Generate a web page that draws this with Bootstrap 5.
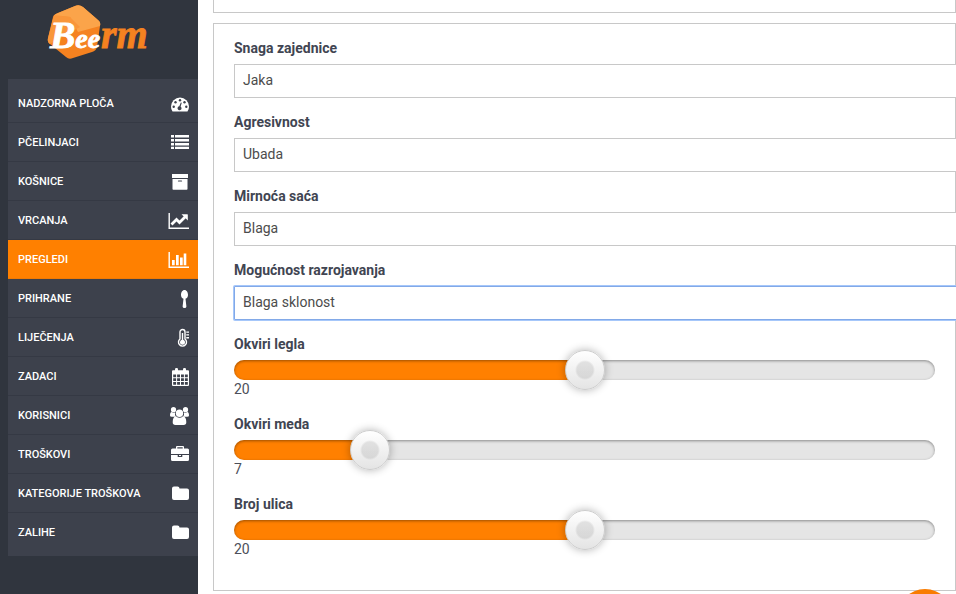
<!DOCTYPE html>
<html lang="hr">
<head>
<meta charset="utf-8">
<meta name="viewport" content="width=device-width, initial-scale=1">
<title>Beerm</title>
<link href="https://cdn.jsdelivr.net/npm/bootstrap@5.3.0/dist/css/bootstrap.min.css" rel="stylesheet">
<style>
  body { font-family: Roboto, "Liberation Sans", sans-serif; font-size: 14px; line-height: 20px; color: #414552; }
  .side-bar { width: 198px; background: #30353e; }
  .brand-link { height: 79px; padding: 2px 0 0 44px; }
  .side-menu { background: #3d414c; padding: 5px 0 4px; }
  .side-menu a { height: 39px; padding: 2px 8px 0 10px; color: #fff; font-size: 11px; font-weight: 500; border-bottom: 1px solid #353944; }
  .side-menu a.active { background: #ff8000; border-bottom-color: #ef7a05; }
  .side-menu a:last-child { border-bottom-color: transparent; }
  .side-menu svg { width: 22px; height: 20px; fill: #fff; }
  .page-main { min-width: 0; padding-left: 15px; }
  .panel { border: 1px solid #c8c8c8; padding: 15px 20px; }
  .panel-above { border-top: 0; height: 13px; padding: 0; margin-bottom: 10px; }
  .field { margin-bottom: 15px; }
  .field label { font-weight: 700; line-height: 18px; margin-bottom: 7px; }
  .field output { line-height: 18px; padding-bottom: 2px; color: #4c4f5a; }
  /* selects run on past the panel's right edge */
  .wide-select { width: calc(100% + 60px); height: 34px; padding: 5px 8px 7px; border: 1px solid #c8c8c8; border-radius: 0; background: #fff; color: #4c4c4c; appearance: none; outline: 0; }
  .wide-select:focus, .wide-select.focused { border-color: #82a9e8; box-shadow: 0 0 0 1px #a6c7fa; border-radius: 1px; }
  .slider { width: 100%; height: 20px; margin: 0; appearance: none; border-radius: 10px; box-shadow: inset 0 1px 3px rgba(0,0,0,.4);
    background: linear-gradient(to right, #ff8000 var(--fill), #e5e5e5 var(--fill)); }
  .slider::-webkit-slider-thumb { appearance: none; width: 40px; height: 40px; border: 1px solid #ccc; border-radius: 50%;
    background: radial-gradient(circle, rgba(0,0,0,.09) 8px, transparent 10px), linear-gradient(#fff, #e4e4e4); box-shadow: 0 0 8px rgba(0,0,0,.3); }
  .fab { right: 3px; bottom: -51px; width: 56px; height: 56px; background: #f97c00; }
</style>
</head>
<body class="bg-white">
<div class="d-flex min-vh-100 overflow-hidden">
  <aside class="side-bar flex-shrink-0">
    <a href="#" class="brand-link d-block">
      <svg width="110" height="60" viewBox="44 2 110 60">
        <path d="M58 13 75 6Q79 4 83 7L98 20Q101 22 100 26L97 47Q96 51 92 52L73 58Q69 60 66 57L50 44Q47 42 48 38L53 17Q54 14 58 13Z" fill="#f58220"/>
        <path d="M58 13 75 6Q79 4 83 7L98 20Q101 22 100 26L78 32 70 17 54 16Q55 14 58 13Z" fill="#fba44a"/>
        <path d="M54 15 70 17 80 27 50 44Q47 42 48 38Z" fill="#f9963a"/>
        <text x="50" y="48" font-family="Liberation Serif, serif" font-weight="700" font-style="italic" fill="#fff" stroke="#fff" stroke-width=".8"><tspan font-size="38">B</tspan><tspan font-size="28">ee</tspan></text>
        <text x="101" y="48" font-family="Liberation Serif, serif" font-weight="700" font-style="italic" font-size="40" fill="#f58220" stroke="#f58220" stroke-width=".8">rm</text>
      </svg>
    </a>
    <nav class="side-menu ms-2 d-flex flex-column">
      <a href="#" class="d-flex align-items-center justify-content-between text-decoration-none">NADZORNA PLOČA
        <svg viewBox="0 0 22 20"><path d="M12 3.500a9 9 0 0 0-9 9q0 2.700 1.400 4.800.2.300.6.300h14q.4 0 .6-.3Q21 15.200 21 12.500a9 9 0 0 0-9-9z"/><g fill="#3d414c"><circle cx="5.700" cy="12.700" r="1.200"/><circle cx="7.500" cy="8.200" r="1.200"/><circle cx="12" cy="6.200" r="1.200"/><circle cx="16.500" cy="8.200" r="1.200"/><circle cx="18.300" cy="12.700" r="1.200"/><path d="M13.800 8.800 12.600 12.600a2 2 0 1 1-1.300-.3L12.800 8.500z"/></g></svg></a>
      <a href="#" class="d-flex align-items-center justify-content-between text-decoration-none">PČELINJACI
        <svg viewBox="0 0 22 20"><path d="M3 2h3v2.500H3zM7 2h14v2.500H7zM3 6h3v2.500H3zM7 6h14v2.500H7zM3 10h3v2.500H3zM7 10h14v2.500H7zM3 13.700h3V16H3zM7 13.700h14V16H7z"/></svg></a>
      <a href="#" class="d-flex align-items-center justify-content-between text-decoration-none">KOŠNICE
        <svg viewBox="0 0 22 20"><path d="M4 2h16v4H4zM4.500 7h15v10q0 .8-.8.8H5.300q-.8 0-.8-.8z"/><path d="M10.500 9h3" stroke="#3d414c" stroke-width="1.200" stroke-linecap="round"/></svg></a>
      <a href="#" class="d-flex align-items-center justify-content-between text-decoration-none">VRCANJA
        <svg viewBox="0 0 22 20"><path d="M.5 2h1.400v14.500H21V18H.5z"/><path d="m3.500 13.500 5-5 3 3 6-6" fill="none" stroke="#fff" stroke-width="2.800"/><path d="M13.500 3.300h5.900q.4 0 .4.400v5.800z"/></svg></a>
      <a href="#" class="active d-flex align-items-center justify-content-between text-decoration-none">PREGLEDI
        <svg viewBox="0 0 22 20"><path d="M.5 2h1.400v14.500H21V18H.5zM4 10h2.700v5.300H4zM8 5h2.700v10.300H8zM12 7.500h2.700v7.800H12zM15.700 3.500h2.600v11.800h-2.600z"/></svg></a>
      <a href="#" class="d-flex align-items-center justify-content-between text-decoration-none">PRIHRANE
        <svg viewBox="0 0 22 20"><path d="M16.500 1C14.300 1 13 3.500 13 6c0 2 1 3.300 2.500 3.800L14.600 17.500q0 1.500 1.900 1.500t1.900-1.500L17.500 9.800C19 9.300 20 8 20 6c0-2.500-1.300-5-3.500-5z"/></svg></a>
      <a href="#" class="d-flex align-items-center justify-content-between text-decoration-none">LIJEČENJA
        <svg viewBox="0 0 22 20"><path d="M12 11V4a2.500 2.500 0 0 1 5 0v7a4 4 0 1 1-5 0z" fill="none" stroke="#fff" stroke-width="1.400"/><circle cx="14.500" cy="14.300" r="2.500"/><path d="M13.800 5h1.400v8h-1.400zM18.300 3.500H21v1.300h-2.700zM18.300 6.300H21v1.300h-2.700zM18.300 9.100H21v1.300h-2.700z"/></svg></a>
      <a href="#" class="d-flex align-items-center justify-content-between text-decoration-none">ZADACI
        <svg viewBox="0 0 22 20"><path d="M5 3.300h15q1 0 1 1V18q0 1-1 1H5q-1 0-1-1V4.300q0-1 1-1z"/><rect x="7" y="1" width="3" height="5" rx="1.200"/><rect x="15" y="1" width="3" height="5" rx="1.200"/><path fill="#3d414c" d="M5.200 7.500h2.900v2.700H5.200zM9.100 7.500h2.900v2.700H9.100zM13 7.500h2.900v2.700H13zM16.900 7.500h2.900v2.700h-2.900zM5.200 11.200h2.900v2.800H5.200zM9.100 11.200h2.900v2.800H9.100zM13 11.200h2.900v2.800H13zM16.900 11.200h2.900v2.800h-2.900zM5.200 15h2.900v2.700H5.200zM9.100 15h2.900v2.700H9.100zM13 15h2.900v2.700H13zM16.900 15h2.900v2.700h-2.900z"/></svg></a>
      <a href="#" class="d-flex align-items-center justify-content-between text-decoration-none">KORISNICI
        <svg viewBox="0 0 22 20"><circle cx="5.500" cy="3.700" r="2.600"/><circle cx="17.500" cy="3.700" r="2.600"/><path d="M2 9.500Q2 6 3.700 6 5 7 7 6.500 6.500 9 8 10.800H3.700Q2 10.800 2 9.500zM21 9.500Q21 6 19.300 6 18 7 16 6.500q.5 2.500-1 4.300h4.300q1.700 0 1.700-1.300z"/><circle cx="11.500" cy="7.300" r="3.700"/><path d="M8 10.300q3.500 3 7 0 3.300.3 3.300 6 0 2.700-2.700 2.700H7.400q-2.700 0-2.700-2.700 0-5.700 3.300-6z"/></svg></a>
      <a href="#" class="d-flex align-items-center justify-content-between text-decoration-none">TROŠKOVI
        <svg viewBox="0 0 22 20"><path fill-rule="evenodd" d="M8 3.500V2q0-1 1-1h6q1 0 1 1v1.500h3.500Q21 3.500 21 5v4H3V5q0-1.500 1.500-1.500zm1.300 0h5.400V2.300H9.300zM3 10h6.700v2h4.600v-2H21v4.500q0 1.500-1.500 1.500h-15Q3 16 3 14.500zM11 10h2v1h-2z"/></svg></a>
      <a href="#" class="d-flex align-items-center justify-content-between text-decoration-none">KATEGORIJE TROŠKOVA
        <svg viewBox="0 0 22 20"><path d="M4 4.500Q4 2.500 6 2.500h3.500q2 0 2 2H19q2 0 2 2V14q0 2-2 2H6q-2 0-2-2z"/></svg></a>
      <a href="#" class="d-flex align-items-center justify-content-between text-decoration-none">ZALIHE
        <svg viewBox="0 0 22 20"><path d="M4 4.500Q4 2.500 6 2.500h3.500q2 0 2 2H19q2 0 2 2V14q0 2-2 2H6q-2 0-2-2z"/></svg></a>
    </nav>
  </aside>
  <main class="page-main flex-grow-1">
    <div class="panel panel-above"></div>
    <form class="panel">
      <div class="field"><label class="d-block" for="snaga">Snaga zajednice</label><select id="snaga" class="wide-select d-block"><option>Jaka</option></select></div>
      <div class="field"><label class="d-block" for="agresivnost">Agresivnost</label><select id="agresivnost" class="wide-select d-block"><option>Ubada</option></select></div>
      <div class="field"><label class="d-block" for="mirnoca">Mirnoća saća</label><select id="mirnoca" class="wide-select d-block"><option>Blaga</option></select></div>
      <div class="field"><label class="d-block" for="razrojavanje">Mogućnost razrojavanja</label><select id="razrojavanje" class="wide-select focused d-block"><option>Blaga sklonost</option></select></div>
      <div class="field"><label class="d-block" for="legla">Okviri legla</label><input id="legla" class="slider d-block" type="range" min="0" max="40" value="20" style="--fill:50%"><output class="d-block" for="legla">20</output></div>
      <div class="field"><label class="d-block" for="meda">Okviri meda</label><input id="meda" class="slider d-block" type="range" min="0" max="40" value="7" style="--fill:18%"><output class="d-block" for="meda">7</output></div>
      <div class="field"><label class="d-block" for="ulica">Broj ulica</label><input id="ulica" class="slider d-block" type="range" min="0" max="40" value="20" style="--fill:50%"><output class="d-block" for="ulica">20</output></div>
    </form>
  </main>
</div>
<button type="button" class="fab position-fixed border-0 rounded-circle"></button>
<script src="https://cdn.jsdelivr.net/npm/bootstrap@5.3.0/dist/js/bootstrap.bundle.min.js"></script>
<script>
  document.querySelectorAll('.slider').forEach(function (s) {
    s.addEventListener('input', function () {
      s.style.setProperty('--fill', (s.value / s.max * 100) + '%');
      s.nextElementSibling.value = s.value;
    });
  });
</script>
</body>
</html>
